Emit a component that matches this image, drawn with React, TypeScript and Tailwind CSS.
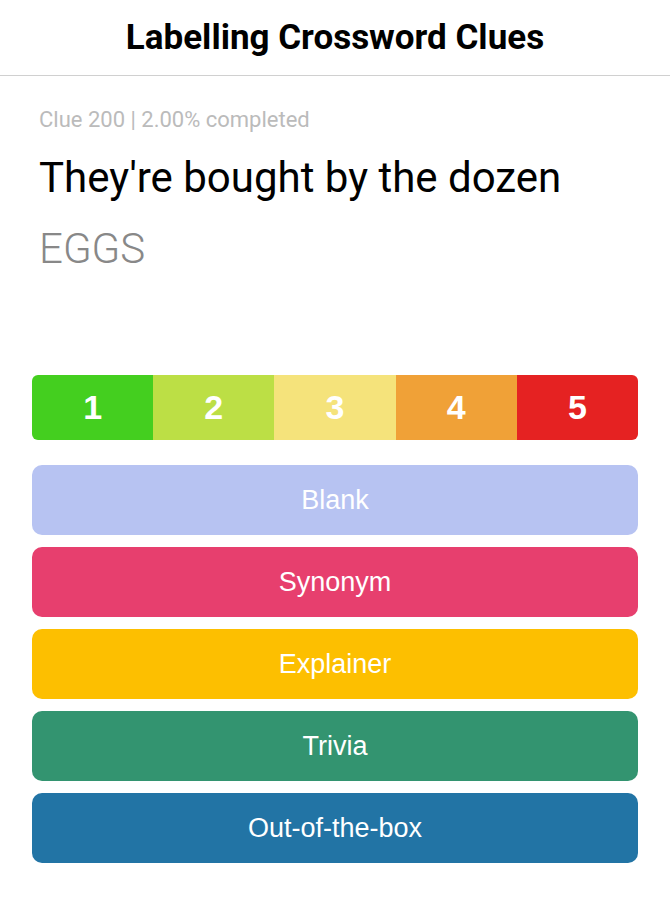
const ratings = [
  { n: 1, bg: "bg-[#44cf1f]" },
  { n: 2, bg: "bg-[#bcdf45]" },
  { n: 3, bg: "bg-[#f5e37b]" },
  { n: 4, bg: "bg-[#f0a137]" },
  { n: 5, bg: "bg-[#e52222]" },
];

const labels = [
  { name: "Blank", bg: "bg-[#b7c3f2]" },
  { name: "Synonym", bg: "bg-[#e73f6e]" },
  { name: "Explainer", bg: "bg-[#fdbf00]" },
  { name: "Trivia", bg: "bg-[#339470]" },
  { name: "Out-of-the-box", bg: "bg-[#2274a5]" },
];

export default function App() {
  return (
    <div className="min-h-[898px] bg-white font-['Roboto',sans-serif]">
      <header className="h-[76px] flex items-center justify-center border-b border-[#d0d0d0]">
        <h1 className="text-[35px] font-bold text-black leading-[40px]">Labelling Crossword Clues</h1>
      </header>

      <main className="px-8">
        <div className="px-[7px] pt-[30px] h-[299px]">
          <p className="text-[22px] text-[#bbbbbb] leading-[28px]">Clue 200 | 2.00% completed</p>
          <p className="mt-[19px] text-[42px] text-black leading-[50px]">They're bought by the dozen</p>
          <p className="mt-[21px] text-[42px] font-light text-[#888888] leading-[50px]">EGGS</p>
        </div>

        <div className="flex h-[65px] rounded-md overflow-hidden font-['Liberation_Sans',Arial,sans-serif]">
          {ratings.map((r) => (
            <button
              key={r.n}
              type="button"
              className={`flex-1 flex items-center justify-center text-white text-[34px] font-bold ${r.bg}`}
            >
              {r.n}
            </button>
          ))}
        </div>

        <div className="mt-[25px] flex flex-col gap-3 font-['Liberation_Sans',Arial,sans-serif]">
          {labels.map((l) => (
            <button
              key={l.name}
              type="button"
              className={`h-[70px] rounded-[10px] flex items-center justify-center text-white text-[27px] ${l.bg}`}
            >
              {l.name}
            </button>
          ))}
        </div>
      </main>
    </div>
  );
}
